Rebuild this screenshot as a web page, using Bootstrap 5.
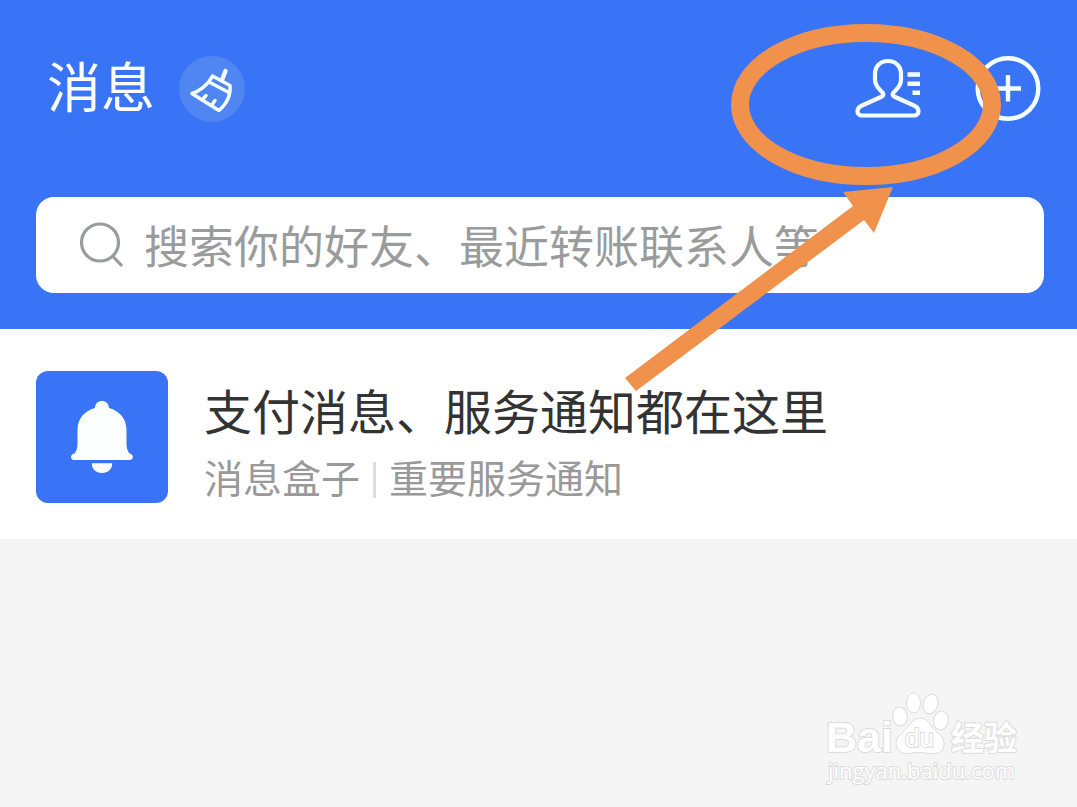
<!DOCTYPE html>
<html lang="zh-CN">
<head>
<meta charset="utf-8">
<meta name="viewport" content="width=device-width, initial-scale=1">
<title>消息</title>
<link href="https://cdn.jsdelivr.net/npm/bootstrap@5.3.0/dist/css/bootstrap.min.css" rel="stylesheet">
<style>
  body { font-family: "Liberation Sans", "Noto Sans CJK SC", sans-serif; background: #f5f5f5; }
  svg { display: block; flex: none; }
  .app-header { background: #3874f5; padding: 56px 36px 36px; }
  .page-title { font-size: 54px; line-height: 66px; margin-left: 11px; }
  .icon-btn { width: 66px; height: 66px; border: 0; padding: 0; background: none; color: #f6ffff; }
  .clean-btn { background: #4f86f2; margin-left: 24px; }
  .top-actions { gap: 54px; }
  .search-box { height: 96px; margin-top: 75px; margin-right: -3px; padding: 0 42px; gap: 20px; border-radius: 18px; color: #999c9b; }
  .search-box input { font-size: 45px; line-height: 60px; color: #333; min-width: 0; padding: 8px 0 0; }
  .search-box input::placeholder { color: #999c9b; opacity: 1; }
  .message-row { padding: 42px 36px 30px; gap: 36px; color: #333; }
  .message-icon { background: #3874f5; border-radius: 12px; }
  .message-title { font-size: 48px; line-height: 66px; padding-top: 10px; }
  .message-sub { font-size: 39px; line-height: 58px; padding-top: 4px; color: #999; }
  .sub-divider { width: 3px; height: 36px; background: #ddd; margin: 0 13px; }
  .annotation { top: 0; right: 0; pointer-events: none; z-index: 2; }
  .watermark { padding: 0 55px 18px 0; }
  .watermark text { fill: #fff; stroke: #dcdcdc; stroke-width: 2px; paint-order: stroke; }
  .wm-url { font-family: "Open Sans", sans-serif; }
</style>
</head>
<body class="min-vh-100 d-flex flex-column position-relative overflow-x-hidden">
<header class="app-header">
  <div class="d-flex align-items-center">
    <h1 class="page-title mb-0 fw-normal text-white">消息</h1>
    <button type="button" class="icon-btn clean-btn rounded-circle" aria-label="清除未读">
      <svg width="66" height="66" viewBox="0 0 66 66" fill="none" stroke="currentColor" stroke-width="3.4" stroke-linejoin="round" stroke-linecap="round">
        <path d="M46.5 15 43 24" stroke-width="4.4"/>
        <path d="M33.5 20 51 29.500C52 39 47.500 48 40 54.500L12.800 37.500C20 35.500 29 29 33.500 20ZM30 26 49 36M23 44 27 39.500M32.500 49.500 36 44.500"/>
      </svg>
    </button>
    <div class="top-actions d-flex ms-auto">
      <button type="button" class="icon-btn" aria-label="通讯录">
        <svg width="66" height="66" viewBox="0 0 66 66" fill="none" stroke="currentColor" stroke-width="4.200" stroke-linejoin="round">
          <path d="M33 5C25 5 20 10.500 20 18V24C20 30 24 33 27.500 36.500C29 38 28.500 39.500 27 40.500L7 49.500C3.500 51 2.500 53 2.500 55.500C2.500 58 4.500 59.500 7 59.500H59C61.500 59.500 63.500 58 63.500 55.500C63.500 53 62.500 51 59 49.500L39 40.500C37.500 39.500 37 38 38.500 36.500C42 33 46 30 46 24V18C46 10.500 41 5 33 5Z"/>
          <path d="M52.500 18.500H65M52.500 27.700H65M57.500 36.800H65" stroke-width="4.600"/>
        </svg>
      </button>
      <button type="button" class="icon-btn" aria-label="添加">
        <svg width="66" height="66" viewBox="0 0 66 66" fill="none" stroke="currentColor" stroke-width="4.400">
          <circle cx="33" cy="32.500" r="30.300"/><path d="M33 19V45.500M20 32.500H46"/>
        </svg>
      </button>
    </div>
  </div>
  <div class="search-box bg-white d-flex align-items-center">
    <label for="search">
      <svg width="46" height="46" viewBox="0 0 46 46" fill="none" stroke="currentColor" stroke-width="3.200" role="img" aria-label="搜索">
        <circle cx="22" cy="20.500" r="18.500"/><path d="M34.500 34 44 44"/>
      </svg>
    </label>
    <input id="search" type="text" class="flex-grow-1 border-0 bg-transparent" placeholder="搜索你的好友、最近转账联系人等">
  </div>
</header>
<main>
  <a href="#" class="message-row d-flex align-items-start bg-white text-decoration-none">
    <svg class="message-icon" width="132" height="132" viewBox="0 0 132 132" fill="#fbfffe">
      <path d="M59 37C59 27.500 73 27.500 73 37C84 40 90.500 48 90.500 59V72C90.500 77 91.500 80 93.500 82.500C98 83 98 89 94 89H38C34 89 34 83 38.500 82.500C40.500 80 41.500 77 41.500 72V59C41.500 48 48 40 59 37Z"/>
      <path d="M55.700 92.300H76.300C76 98.500 72 102 66 102S56 98.500 55.700 92.300Z"/>
    </svg>
    <div>
      <div class="message-title">支付消息、服务通知都在这里</div>
      <div class="message-sub d-flex align-items-center"><span>消息盒子</span><span class="sub-divider"></span><span>重要服务通知</span></div>
    </div>
  </a>
</main>
<footer class="watermark mt-auto d-flex justify-content-end">
  <svg width="200" height="100" viewBox="0 0 200 100">
    <g fill="#fff" stroke="#dcdcdc">
      <ellipse cx="78" cy="27.500" rx="7.300" ry="9.500" transform="rotate(-8 78 27.500)"/>
      <ellipse cx="91.500" cy="14" rx="7" ry="10"/>
      <ellipse cx="108.500" cy="15" rx="7.200" ry="10" transform="rotate(14 108.500 15)"/>
      <ellipse cx="119" cy="31.500" rx="7.300" ry="9.500" transform="rotate(10 119 31.500)"/>
      <path d="M98 29C90 29 88 37 81 43C76 47 74 51 74 55C74 61 79 65 86 64.500C91 64 93 63.500 98 63.500S106 64.500 111 64.500C118 65 122 61 122 55C122 51 120 47 115 43C108 37 106 29 98 29Z"/>
    </g>
    <text x="4" y="63" font-size="43" font-weight="bold">Bai</text>
    <text x="83" y="58" font-size="26">du</text>
    <text x="129" y="61" font-size="33" font-weight="bold">经验</text>
    <text class="wm-url" x="6" y="90" font-size="22">jingyan.baidu.com</text>
  </svg>
</footer>
<!-- hint pointing at the contacts button -->
<svg class="annotation position-absolute" width="477" height="400" viewBox="0 0 477 400" aria-hidden="true">
  <ellipse cx="266" cy="104.500" rx="126" ry="71.500" fill="none" stroke="#f0924c" stroke-width="18"/>
  <path d="M25 378 253 206 243 192 293 187 274 233 264 220 36 391Z" fill="#f0924c"/>
</svg>
<script src="https://cdn.jsdelivr.net/npm/bootstrap@5.3.0/dist/js/bootstrap.bundle.min.js"></script>
</body>
</html>
